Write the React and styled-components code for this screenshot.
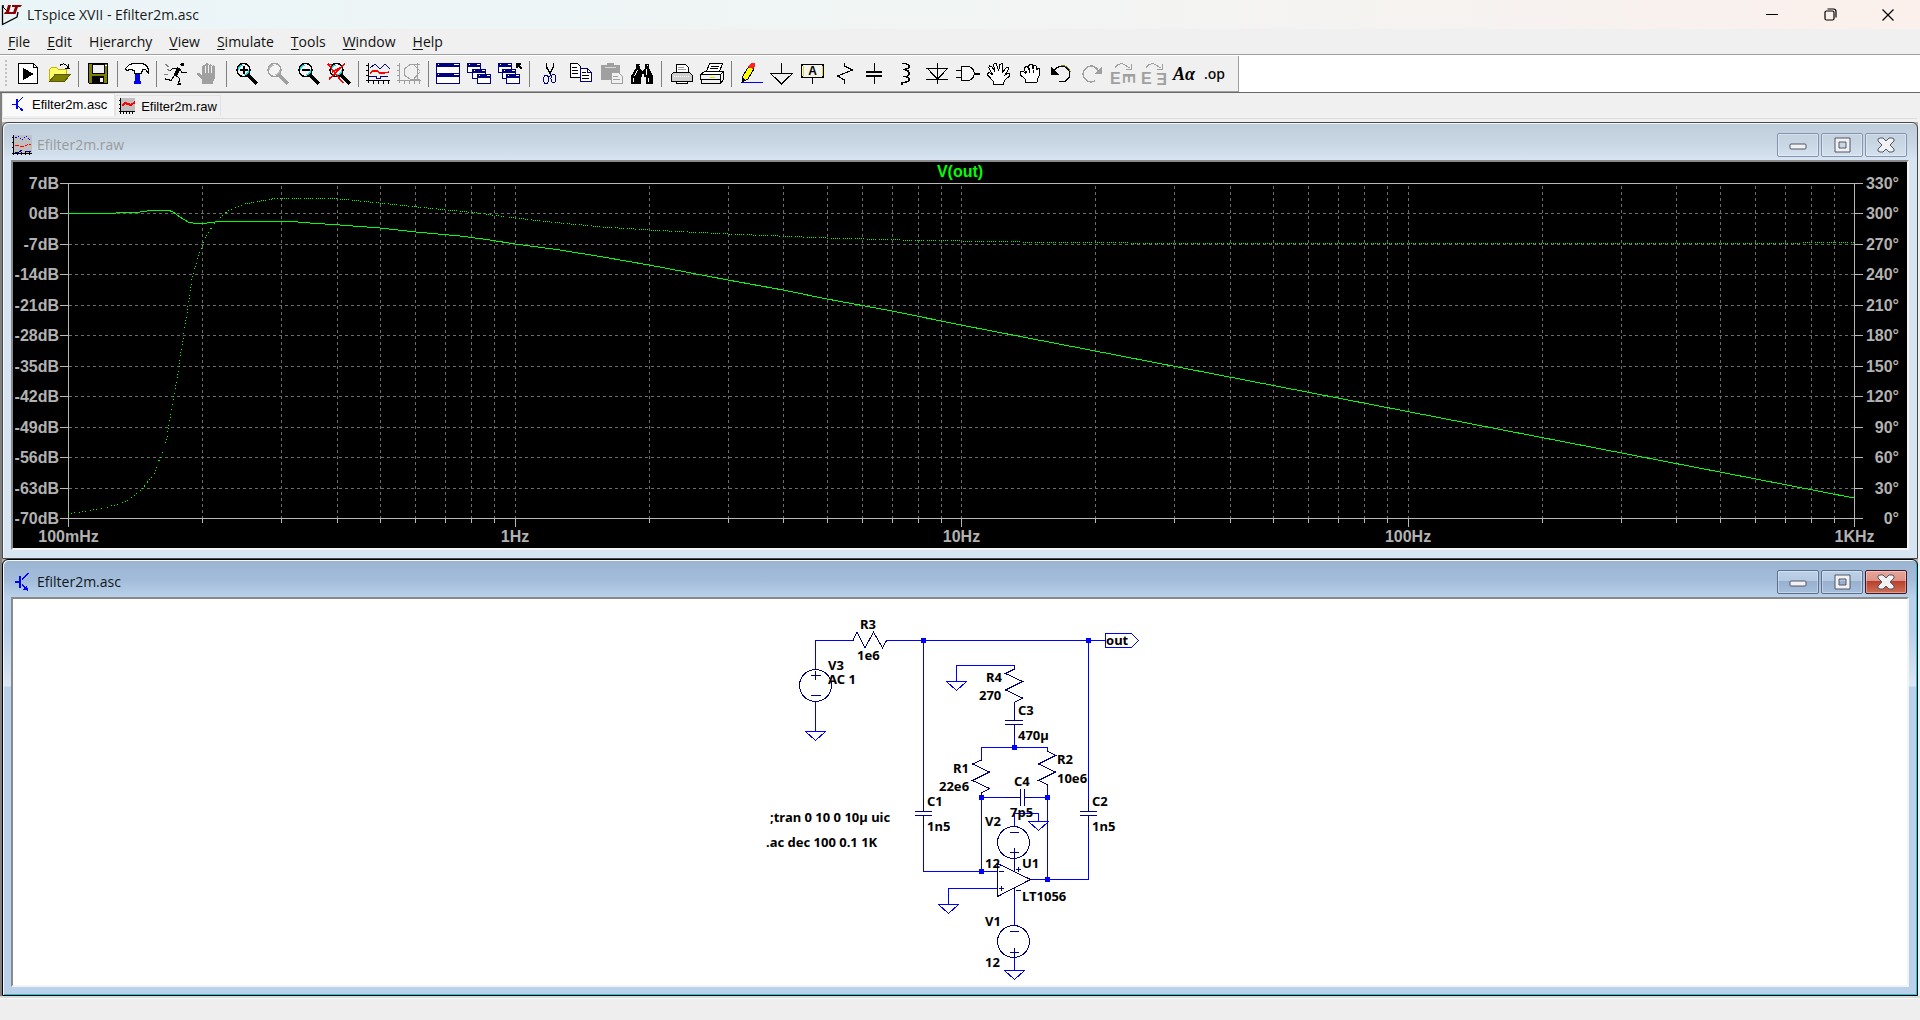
import React from 'react';
import styled, { createGlobalStyle } from 'styled-components';

const GlobalStyle = createGlobalStyle`
  * {
    box-sizing: border-box;
  }
  body {
    margin: 0;
    background: #f0f0f0;
    font-family: 'Open Sans', 'Noto Sans', sans-serif;
    font-size: 14px;
    color: #1a1a1a;
  }
  button {
    font: inherit;
    padding: 0;
    margin: 0;
    border: 0;
    background: transparent;
  }
  svg {
    display: block;
  }
`;

const Wrap = styled.div`
  min-height: 100vh;
  display: flex;
  flex-direction: column;
`;
const TitleBar = styled.header`
  height: 29px;
  display: flex;
  align-items: center;
  padding-right: 3px;
  background: linear-gradient(to right, #eaf5f8, #f1f5f4 50%, #fbf0ec);
`;
const AppTitle = styled.h1`
  flex: 1;
  margin: 0 0 0 5px;
  font-size: 14px;
  font-weight: 400;
`;
const CaptionButton = styled.button`
  width: 58px;
  height: 28px;
  display: flex;
  align-items: center;
  justify-content: center;
`;
const MenuBar = styled.nav`
  height: 26px;
  display: flex;
  gap: 17px;
  padding: 0 8px;
  align-items: center;
  border-bottom: 1px solid #a0a0a0;
`;
const MenuItem = styled.button`
  color: #111;
  u {
    text-underline-offset: 2px;
  }
`;
const ToolBand = styled.div`
  height: 38px;
  background: white;
  border-top: 1px solid white;
  border-bottom: 1px solid #696969;
  display: flex;
`;
const ToolBar = styled.div`
  display: flex;
  align-items: center;
  padding: 0 7px 1px 5px;
  background: #f0f0f0;
  border-right: 1px solid #a0a0a0;
  box-shadow: inset 0 -1px #a0a0a0;
`;
const Grip = styled.div`
  width: 2px;
  height: 28px;
  margin-right: 5px;
  background: repeating-linear-gradient(#c0c0c0 0 2px, transparent 2px 4px);
`;
const ToolButton = styled.button`
  width: 31px;
  height: 32px;
  display: flex;
  align-items: center;
  justify-content: center;
`;
const Separator = styled.div`
  width: 8px;
  height: 26px;
  display: flex;
  justify-content: center;
  &::before {
    content: '';
    width: 1px;
    background: #808080;
  }
`;
const TabStrip = styled.div`
  height: 29px;
  padding: 0 3px 0 0;
  border-left: 2px solid #808080;
  background: #f0f0f0;
`;
const Tabs = styled.div`
  height: 26px;
  display: flex;
  align-items: flex-end;
  padding-bottom: 2px;
  border-bottom: 1px solid #dcdcdc;
`;
const Tab = styled.button`
  height: ${(props) => (props.$active ? '23px' : '21px')};
  display: flex;
  align-items: center;
  gap: 6px;
  padding: ${(props) => (props.$active ? '0 7px 2px 7px' : '0 3px 0 3px')};
  background: ${(props) => (props.$active ? '#fafafa' : '#f0f0f0')};
  border: 1px solid #e3e3e3;
  border-bottom: 0;
  font-family: 'Liberation Sans', sans-serif;
  font-size: 13px;
  color: black;
`;
const Workspace = styled.main`
  flex: 1;
  display: flex;
  flex-direction: column;
  padding-right: 2px;
  border-left: 2px solid #808080;
  background: #b4b0a4;
  box-shadow: inset -2px 0 #f0f0f0;
`;
const ChildWindow = styled.section`
  flex: 1 1 0;
  min-height: 0;
  display: flex;
  flex-direction: column;
  padding: 0 8px 8px;
  border: 1px solid ${(props) => (props.$active ? '#000' : '#484848')};
  border-radius: 6px 6px 0 0;
  background: ${(props) =>
    props.$active
      ? 'linear-gradient(#99b4d1, #a3bcd9 20px, #b9d1ea 37px, #b9d1ea 70px, #dbe7f4 126px, #b9d1ea 127px)'
      : 'linear-gradient(#bfcddb, #c8d6e4 20px, #d7e4f2 37px)'};
  box-shadow: inset 1px 1px #f4f8fc
    ${(props) => (props.$active ? ', inset -1px -1px #1cc6dc' : '')};
`;
const ChildTitleBar = styled.div`
  height: 37px;
  display: flex;
  align-items: center;
  gap: 2px;
  padding: 6px 2px 0 1px;
`;
const ChildTitle = styled.h2`
  flex: 1;
  margin: 0 0 0 3px;
  font-size: 14px;
  font-weight: 400;
  color: ${(props) => (props.$active ? '#101820' : '#9a9a9a')};
`;
const ChildButton = styled.button`
  width: 42px;
  height: 24px;
  display: flex;
  align-items: center;
  justify-content: center;
  border: 1px solid #8494b0;
  border-radius: 2px;
  box-shadow: inset 0 0 0 1px rgba(255, 255, 255, 0.35);
  ${(props) =>
    props.$active &&
    `border-color: #5c6f8c;
     background: linear-gradient(#bdd0e6, #b3c9e2 46%, #98b0cd 47%, #a6bfdc);`}
  ${(props) =>
    props.$active &&
    props.$close &&
    `border-color: #431622;
     background: linear-gradient(#e6a59a, #dc9285 46%, #b8402b 47%, #cf7058);`}
`;
const Sunken = styled.div`
  flex: 1;
  min-height: 0;
  display: flex;
  border: 2px solid;
  border-color: #8a8a8a #f4f4f4 #f4f4f4 #8a8a8a;
  background: ${(props) => props.$color};
`;
const Canvas = styled.svg`
  flex: 1;
  min-width: 0;
  min-height: 0;
  width: 100%;
  height: 100%;
`;
const AxisText = styled.text`
  font-family: 'Liberation Sans', sans-serif;
  font-size: 16px;
  font-weight: 700;
  fill: ${(props) => props.$color || '#b2b2b2'};
  text-anchor: ${(props) => props.$anchor || 'middle'};
`;
const PartText = styled.text`
  font-family: 'Noto Sans', sans-serif;
  font-size: 13px;
  font-weight: 700;
  fill: black;
`;
const StatusBar = styled.footer`
  height: 24px;
  border-top: 2px solid #dadada;
  box-shadow: inset 0 1px #f8f8f8;
  background: #eeeeee;
`;

/* ---------- toolbar icons, 24x24 ---------- */

const G = '#a0a0a0';
const N = '#000080';

const Lens = ({ color = 'black', glass = '#00e5e5', children }) => (
  <>
    <path d='M14 13l9 9' stroke={color} strokeWidth='3' />
    <circle cx='9.5' cy='8' r='6.5' fill='#f4f4f4' stroke={color} strokeWidth='1.5' />
    <path d='M4.5 8q0-4 4-5M14.5 8q0 4-4 5' stroke={glass} strokeWidth='1.5' />
    {children}
  </>
);
const OpenHand = (
  <path
    d='M6.500 22.500v-3L1 13.500l-.5-2 2-1 3.500 2.500L1.500 5.500l1-1.500 2 .5 3.500 5L6.500 3l1-1.500 2 .5 2 7 1.500-6.500 2-1 1 2-.5 7 3.500-4.500 2-.5.5 2-3.500 5.500 3-1.500 2 .5-.5 2-4 3.500-2 3v2z'
    fill='white'
    stroke='black'
  />
);
const Fist = (
  <path
    d='M7.500 20.500v-3l-5-4.500v-3l3-.5 2 2-1-5 1-2h2l1 2 .5-3 1-1h2l1 4 1-3 2 .5 1 4 1-1.500h1.500l.5 2-1 6-2 3v2.500zM8 9v2M11 6v5M15 8v3'
    fill='white'
    stroke='black'
  />
);
const CascadePane = ({ x, y }) => (
  <g>
    <rect x={x + 0.5} y={y + 0.5} width='13' height='9' fill='white' stroke={N} />
    <rect x={x} y={y} width='14' height='4' fill={N} />
    <path d={`M${x + 2} ${y + 1.5}h1M${x + 10} ${y + 1.5}h3`} stroke='white' />
  </g>
);

const icons = {
  new: (
    <>
      <path d='M2.500 1.500h15l4 4v16h-19z' fill='white' stroke='black' />
      <path d='M17.500 1.500v4h4' stroke='black' />
      <path d='M7 6l11 6-11 6z' fill='black' />
    </>
  ),
  open: (
    <>
      <path d='M2.500 19.500v-12l2-2h5l2 2h8v4' fill='#ffff66' stroke='#c8b400' />
      <path d='M2.500 19.500l6-7.500h15l-6 7.500z' fill='#808000' stroke='#5a5a00' />
      <path d='M13 3.500q4-4 8 2M17.500 6h5M21.500 2v5' stroke='black' />
    </>
  ),
  save: (
    <>
      <path d='M2.500 1.500h19v20h-18l-1-1z' fill='#808000' stroke='black' />
      <rect x='6' y='2' width='12' height='9' fill='#f0f0f0' stroke='black' />
      <path d='M19 3.500h2' stroke='white' />
      <rect x='6' y='14' width='12' height='8' fill='black' />
      <rect x='14' y='16' width='3' height='4' fill='#f0f0f0' />
    </>
  ),
  hammer: (
    <>
      <path d='M10 10h5v9h1v3h-7v-3h1z' fill='#0000ff' />
      <path d='M13 10v10' stroke={N} />
      <path
        d='M.5 6.500l4-4 4-1h9l4 2 2 4v4l-3-4h-3v2h-1v2h-7v-3l-4-1-4 1z'
        fill='white'
        stroke='black'
      />
    </>
  ),
  run: (
    <>
      <circle cx='18.5' cy='2.500' r='2' fill='black' />
      <path d='M15 6l-4 8' stroke='black' strokeWidth='3.500' />
      <path d='M14 6.500H8.500l-3 3M16 7l2 3.500h5' stroke='black' />
      <path d='M12 13l4 4-2 5h3M10 14l-3 4.500-6-1.500' stroke='black' strokeWidth='1.200' />
      <path d='M1 2l4 3M3 7l3 2M0 12.500h4' stroke='#808080' />
    </>
  ),
  halt: (
    <>
      <path
        d='M7 22v-4l-5-5v-2h2l3 2V4l2-1 1 1 1-3h2l1 2 2-1 1 2 2-1 1 2v11l-2 4v2z'
        fill={G}
      />
      <path d='M10.500 4v7M13.500 3v8M16.500 4v7' stroke='#f0f0f0' />
    </>
  ),
  zoomIn: (
    <Lens>
      <path d='M9.500 4v8M5.500 8h8' stroke='black' strokeWidth='2' />
    </Lens>
  ),
  zoomPan: <Lens color={G} glass='#b8b8b8' />,
  zoomOut: (
    <Lens>
      <path d='M5.500 8h8' stroke='black' strokeWidth='2' />
    </Lens>
  ),
  zoomFit: (
    <Lens>
      <path d='M1 2l15 19M18 2L2 17M1 2l4 1M5 10l10-5' stroke='red' strokeWidth='1.500' />
    </Lens>
  ),
  plot: (
    <>
      <path d='M2.500 1v20M0 3.500h2M0 8.500h2M0 13.500h2M0 18.500h24M7.500 19v3M12.500 19v3M17.500 19v3M22.500 19v3' stroke='black' />
      <path d='M4 6l5-4 5 5 5-5 5 5' stroke={N} />
      <path d='M4 11l3-2h4l3 2h4l5-1' stroke='red' strokeWidth='1.500' />
      <path d='M3 14.500h7v2h4v-2h8' stroke={N} />
    </>
  ),
  nyquist: (
    <>
      <path d='M2.500 1v20M0 3.500h2M0 8.500h2M0 13.500h2M0 18.500h24M7.500 19v3M12.500 19v3M17.500 19v3M22.500 19v3' stroke={G} />
      <path d='M23 2H14L7 7v6l6 4h10M20 1v18M16 2l7 7M23 10l-7 8' stroke={G} />
    </>
  ),
  tile: (
    <>
      <path d='M.5 1.500h23v20H.5zM.5 11.500h23' fill='white' stroke={N} />
      <rect y='1' width='24' height='4' fill={N} />
      <rect y='11' width='24' height='4' fill={N} />
      <path d='M2 2.500h1M18 2.500h5M2 12.500h1M18 12.500h5' stroke='white' />
    </>
  ),
  cascade: (
    <>
      <CascadePane x={0} y={1} />
      <CascadePane x={5} y={7} />
      <CascadePane x={10} y={12} />
    </>
  ),
  closeAll: (
    <>
      <CascadePane x={0} y={1} />
      <CascadePane x={4} y={7} />
      <CascadePane x={8} y={12} />
      <path d='M19 6V2h4M19 2l5 5' stroke='black' strokeWidth='1.500' />
    </>
  ),
  cut: (
    <>
      <path d='M9.500 1v4l4 7M16.500 1v4l-4 7' stroke='black' strokeWidth='1.500' />
      <ellipse cx='9' cy='17.500' rx='2.500' ry='4' stroke={N} />
      <ellipse cx='16.500' cy='16.500' rx='2.500' ry='4' stroke={N} />
      <path d='M13 11v3l-2 1M13 12l2 2' stroke={N} />
    </>
  ),
  copy: (
    <>
      <path d='M2.500 1.500h7l3 3v11h-10z' fill='white' stroke='black' />
      <path d='M4 5.500h5M4 8.500h6M4 11.500h6' stroke='black' />
      <path d='M12.500 6.500h7l4 4v9h-11z' fill='white' stroke={N} />
      <path d='M19.500 6.500v4h4' stroke={N} />
      <path d='M14 10.500h4M14 13.500h7M14 16.500h7' stroke='black' />
    </>
  ),
  paste: (
    <>
      <path d='M2 3h6V1h7v2h6v15H2z' fill={G} />
      <path d='M6 5.500h11' stroke='#d8d8d8' />
      <path d='M12.500 10.500h7l4 4v7h-11z' fill='#f0f0f0' stroke={G} />
      <path d='M14 14.500h5M14 17.500h7' stroke={G} />
    </>
  ),
  find: (
    <>
      <path d='M6 2h4v4l2 3h1l2-3V2h4v4l4 8v8h-7v-7h-2v-3h-2v3h-1v7H1v-8l5-8z' fill='black' />
      <path d='M7.500 8l-3 6M16.500 7v6M3.500 16v4M18.500 16v4M8.500 3h1M16.500 3h1' stroke='white' />
    </>
  ),
  print: (
    <>
      <path d='M7.500 10.500v-8h9l3 3v5' fill='white' stroke='black' />
      <path d='M9 5.500h6M9 7.500h8' stroke={G} />
      <path d='M4.500 10.500h16l3 3v6h-21v-7z' fill='#d0d0d0' stroke='black' />
      <path d='M7.500 19.500h11v2h-11z' fill='white' stroke='black' />
      <path d='M5 14.500h15' stroke='white' strokeDasharray='1 1' />
    </>
  ),
  printSetup: (
    <>
      <path d='M6.500 9.500l3-8h13l-3 8' fill='white' stroke='black' />
      <path d='M11 4.500h8M10 6.500h8' stroke='black' />
      <path d='M.5 12.500l4-3h19l-3 3z' fill='white' stroke='black' />
      <path d='M.5 12.500h20v5H.5zM1.500 17.500h19v4h-19zM20.500 12.500l3-3v8l-3 4' fill='#f0f0f0' stroke='black' />
      <path d='M10 15.500h5' stroke='#e0e000' />
    </>
  ),
  wire: (
    <>
      <path d='M3 20l1-6 6-10 5 3-6 10z' fill='#ffff00' stroke='black' />
      <path d='M9 5l3-4h4v3l-2 3z' fill='#ff2020' />
      <path d='M3 20l1-4 2 2z' fill='black' />
      <path d='M3 20.500h21' stroke='#0000ff' />
    </>
  ),
  ground: <path d='M11.500 1v10M0 11.500h23M1 12l10.500 10L22 12' stroke='black' strokeWidth='1.200' />,
  label: (
    <>
      <path d='M1.500 2.500h20l1 1v11l-1 1h-20l-1-1v-11z' fill='#f4f4e8' stroke='black' strokeWidth='1.500' />
      <path d='M11.500 16v6' stroke='black' />
      <path d='M2 4v10M21 4v10' stroke='#d6d650' />
      <text x='11.500' y='13' textAnchor='middle' fontFamily='Liberation Sans' fontSize='12' fontWeight='700' fill='black'>
        A
      </text>
    </>
  ),
  resistor: <path d='M12.500 1v3l8 4-15 6 7 4v4' stroke='black' strokeWidth='1.200' />,
  capacitor: (
    <>
      <path d='M11.500 1v8M11.500 15v7' stroke='black' />
      <path d='M3 10h16M3 14h16' stroke='black' strokeWidth='2' />
    </>
  ),
  inductor: (
    <path d='M8 1.500h3q4 1 4 3t-4 3H9q6 0 6 4t-6 3h2q4 1 4 3t-4 3H8v2' stroke='black' strokeWidth='1.500' />
  ),
  diode: (
    <path d='M12.500 1v21M1 6.500h22M3 7l9.500 10L22 7M1 17.500h22' stroke='black' strokeWidth='1.200' />
  ),
  gate: (
    <>
      <path d='M5.500 4.500h7q5 1 6 7-1 6-6 7h-7z' stroke='black' fill='#f8f8f8' />
      <path d='M0 8h5M0 15h5' stroke='black' />
      <path d='M18 12h6' stroke='black' strokeWidth='2' />
    </>
  ),
  move: OpenHand,
  drag: Fist,
  undo: (
    <>
      <path d='M4 10q4-6 9-6 7 1 8 8-1 7-8 8l-3-1' stroke='black' strokeWidth='1.200' />
      <path d='M12 3.500q8 0 9.500 7' stroke='#808000' />
      <path d='M2 5v8h8z' fill='black' />
    </>
  ),
  redo: (
    <>
      <path d='M19 10q-3-6-8-6-7 1-8 8 1 7 8 8l4-1' stroke={G} strokeWidth='1.500' />
      <path d='M22 5v7h-8z' fill={G} />
    </>
  ),
  rotate: (
    <>
      <path d='M4 6q3-5 8-4l7 4M20 2v5h-5' stroke={G} />
      <text x='-1' y='22' fontFamily='Liberation Sans' fontSize='16' fontWeight='700' fill={G}>
        E
      </text>
      <text x='0' y='0' transform='translate(12 11) rotate(90)' fontFamily='Liberation Sans' fontSize='16' fontWeight='700' fill={G}>
        E
      </text>
    </>
  ),
  mirror: (
    <>
      <path d='M4 6q3-5 8-4l7 4M20 2v5h-5' stroke={G} />
      <text x='-1' y='22' fontFamily='Liberation Sans' fontSize='16' fontWeight='700' fill={G}>
        E
      </text>
      <text x='0' y='0' transform='translate(25 11) rotate(180)' fontFamily='Liberation Sans' fontSize='16' fontWeight='700' fill={G}>
        E
      </text>
    </>
  ),
  text: (
    <text x='0' y='18' fontFamily='Liberation Serif' fontSize='18' fontWeight='700' fontStyle='italic' fill='black'>
      Aα
    </text>
  ),
  spice: (
    <text x='0' y='17' fontFamily='Noto Sans' fontSize='14' fontWeight='500' fill='black'>
      .op
    </text>
  ),
};

const toolGroups = [
  ['new', 'open'],
  ['save'],
  ['hammer'],
  ['run', 'halt'],
  ['zoomIn', 'zoomPan', 'zoomOut', 'zoomFit'],
  ['plot', 'nyquist'],
  ['tile', 'cascade', 'closeAll'],
  ['cut', 'copy', 'paste', 'find'],
  ['print', 'printSetup'],
  [
    'wire', 'ground', 'label', 'resistor', 'capacitor', 'inductor', 'diode', 'gate',
    'move', 'drag', 'undo', 'redo', 'rotate', 'mirror', 'text', 'spice',
  ],
];

const AppLogo = () => (
  <svg width='22' height='24' viewBox='0 0 22 24'>
    <path d='M4 3H2.500v18.500L17 14l1-5' fill='none' stroke='black' strokeWidth='1.300' />
    <path d='M2.500 3.500l7 7' stroke='black' />
    <path d='M8 2h3L9 9h5l-1 2H4l1-2h1z' fill='#8b0000' />
    <path d='M12 2h10l-1.500 2H18l-2.500 7h-3L15 4h-3z' fill='#8b0000' />
  </svg>
);
const TransistorIcon = ({ size }) => (
  <svg width={size} height={size} viewBox='0 0 16 16' shapeRendering='crispEdges'>
    <path d='M2 8h4M8 6l5-5M8 10l5 5' stroke='#0000ff' fill='none' />
    <path d='M6.500 3v10' stroke='#0000ff' strokeWidth='2' />
    <path d='M13 15l-1-4-3 3z' fill='#0000ff' />
  </svg>
);
const RawIcon = () => (
  <svg width='16' height='16' viewBox='0 0 16 16' shapeRendering='crispEdges'>
    <rect x='2' width='14' height='14' fill='#c0c0c0' />
    <path d='M1.500 0v16M0 2.500h2M0 6.500h2M0 10.500h2M0 13.500h16M4.500 14v2M7.500 14v2M10.500 14v2M13.500 14v2' stroke='black' />
    <path d='M3 8l3-3 3 1 3 1 4-3' stroke='red' strokeWidth='2' fill='none' />
  </svg>
);
const RawWindowIcon = () => (
  <svg width='20' height='20' viewBox='0 0 20 20' shapeRendering='crispEdges'>
    <rect x='1' width='19' height='19' fill='#c0c0c0' />
    <path d='M1.500 0v20M0 2.500h1M0 7.500h1M0 12.500h1M0 18.500h20M5.500 17v3M9.500 17v3M13.500 17v3M17.500 17v3' stroke='black' />
    <path d='M3 3l3-2 4 4 4-4 4 4' stroke='#0000ff' strokeDasharray='2 1' fill='none' />
    <path d='M3 10l4 1 4 1 4-2 4-1' stroke='red' strokeDasharray='4 1' fill='none' />
    <path d='M3 17l4 0 3-2M13 16h6' stroke={N} fill='none' />
  </svg>
);
const glyphs = {
  Minimize: <rect x='2' y='8' width='16' height='5' rx='1' />,
  Maximize: <path fillRule='evenodd' d='M3 2h15v14H3zM7 6v6h7V6z' />,
  Close: <path d='M2 3l2-1h3l3 3 3-3h3l2 1v2l-4 4 4 4v2l-2 1h-3l-3-3-3 3H4l-2-1v-2l4-4-4-4z' />,
};

/* ---------- bode plot ---------- */

const PLOT = { left: 55.5, right: 1841.5, top: 21.5, bottom: 356.5 };
const DECADE = (PLOT.right - PLOT.left) / 4;
const rows = Array.from({ length: 12 }, (_, i) => ({
  y: Math.floor(PLOT.top + (i * (PLOT.bottom - PLOT.top)) / 11) + 0.5,
  gain: `${7 - i * 7}dB`,
  phase: `${330 - i * 30}°`,
}));
const columns = [];
for (let d = 0; d < 4; d++) {
  for (let n = 1; n < 10; n++) {
    columns.push({
      x: Math.floor(PLOT.left + DECADE * (d + Math.log10(n))) + 0.5,
      major: n === 1,
    });
  }
}
columns.push({ x: PLOT.right, major: true });
const freqs = ['100mHz', '1Hz', '10Hz', '100Hz', '1KHz'];

const GAIN =
  '55,51 103,51 127,50 142,48 155,48 160,50 167,55 175,60 180,61 194,61 202,60 212,59 270,59 285,60 297,61 327,63 367,66 403,70 447,74 477,78 502,82 547,88 590,95 636,103 715,118 770,128 814,137 879,149 948,163 1841,336';
const PHASE_RISE =
  '55,351 61,351 74,349 87,347 95,345 105,342 115,338 123,332 131,325 135,319 141,312 145,301 149,291 154,275 157,256 160,240 163,221 166,205 168,190 170,179 171,169 174,151 177,130 179,117 181,108 183,104 185,94 189,85 194,73 199,65 206,57 212,51 220,46 232,42';
const PHASE_FLAT =
  '232,42 247,39 265,36 310,36 337,38 367,41 404,45 434,48 464,51 487,54 502,56 547,61 590,65 636,68 715,72 814,76 887,78 1007,80 1117,81 1237,81 1787,81 1841,80';

function BodePlot() {
  return (
    <Canvas viewBox='0 0 1894 386' fill='none'>
      <g shapeRendering='crispEdges'>
        <g stroke='#6c6c6c' strokeDasharray='3 3'>
          {rows.slice(1, -1).map((r) => (
            <path key={r.y} d={`M${PLOT.left} ${r.y}H${PLOT.right}`} />
          ))}
          {columns.slice(1, -1).map((c) => (
            <path key={c.x} d={`M${c.x} 24V${PLOT.bottom}`} />
          ))}
        </g>
        <g stroke='#b8b8b8'>
          <path d={`M${PLOT.left} ${PLOT.top}H${PLOT.right}V${PLOT.bottom}H${PLOT.left}z`} />
          {rows.map((r) => (
            <path key={r.y} d={`M47 ${r.y}h8M${PLOT.right} ${r.y}h8`} />
          ))}
          {columns.map((c) => (
            <path key={c.x} d={`M${c.x} ${PLOT.bottom}v${c.major ? 8 : 4}`} />
          ))}
        </g>
        <polyline points={GAIN} stroke='#00ff00' />
        <polyline points={PHASE_RISE} stroke='#00ff00' strokeDasharray='1 2 1 2 1 4' />
        <polyline points={PHASE_FLAT} stroke='#00ff00' strokeDasharray='1 1 1 1 1 1 1 1 1 3' />
      </g>
      {rows.map((r) => (
        <g key={r.y}>
          <AxisText x='46' y={r.y + 5.5} $anchor='end'>
            {r.gain}
          </AxisText>
          <AxisText x='1886' y={r.y + 5.5} $anchor='end'>
            {r.phase}
          </AxisText>
        </g>
      ))}
      {freqs.map((f, i) => (
        <AxisText key={f} x={PLOT.left + DECADE * i} y='380'>
          {f}
        </AxisText>
      ))}
      <AxisText x='947' y='15' $color='#00ff00'>
        V(out)
      </AxisText>
    </Canvas>
  );
}

/* ---------- schematic ---------- */

const nodes = [
  [923, 640], [1088, 640], [1014, 747], [981, 797], [1047, 797], [981, 871], [1047, 879],
];
const grounds = [
  [815, 731], [956, 681], [1038, 821], [948, 904], [1014, 970],
];
const partTexts = [
  [860, 629, 'R3'], [857, 660, '1e6'], [828, 670, 'V3'], [828, 684, 'AC 1'],
  [1106, 645, 'out'], [986, 682, 'R4'], [979, 700, '270'],
  [1018, 715, 'C3'], [1018, 740, '470µ'], [953, 773, 'R1'],
  [939, 791, '22e6'], [1057, 764, 'R2'], [1057, 783, '10e6'],
  [1014, 786, 'C4'], [1010, 817, '7p5'], [927, 806, 'C1'], [927, 831, '1n5'],
  [1092, 806, 'C2'], [1092, 831, '1n5'], [985, 826, 'V2'], [985, 868, '12'],
  [1022, 868, 'U1'], [1022, 901, 'LT1056'], [985, 926, 'V1'], [985, 967, '12'],
  [770, 822, ';tran 0 10 0 10µ uic'], [766, 847, '.ac dec 100 0.1 1K'],
];

function Schematic() {
  return (
    <Canvas viewBox='13 599 1894 386' fill='none'>
      <g shapeRendering='crispEdges'>
        <g stroke='#0000ff'>
          <path d='M815.500 669V640.500H853M886 640.500h219M815.500 701v30' />
          <path d='M923.500 640v160M923.500 828v43.500H982M1088.500 640v160M1088.500 828v51.500H1030' />
          <path d='M956.500 681v-15.500h58V669M1014.500 735v12M981.500 759v-11.500h66v4' />
          <path d='M981.500 797.500H1006M1032 797.500h15M981.500 797v74.500H998M1047.500 785v95' />
          <path d='M1014.500 826v-12.500h24v8M998 888.500h-49.500V904M1014.500 896v29M1014.500 957v13' />
          <path d='M1105.500 633.500h26l7 7-7 7h-26z' />
          {grounds.map(([x, y]) => (
            <path key={x} d={`M${x - 9.5} ${y + 0.5}h20l-10 9z`} />
          ))}
        </g>
        {nodes.map(([x, y]) => (
          <rect key={`${x}-${y}`} x={x - 2} y={y - 2} width='5' height='5' fill='#0000ff' />
        ))}
        <g stroke={N}>
          <path d='M853 640.500l4-8.500 8 16 8.500-16 9 16 4-7.500' />
          <path d='M1014.500 665v4l-9 4.500 17 8-17 8.500 17 8-8 4.500v18M1005 720.500h18M1005 724.500h18M1014.500 724v12' />
          <path d='M981.500 759v1l-9 4 17 8-17 8.500 17 8-8 4.500v4' />
          <path d='M1047.500 751l8 4.500-17 8.500 17 8-17 8.500 9 4v1' />
          <path d='M1006 797.500h14.500M1020.500 789v17M1024.500 789v17M1024 797.500h8' />
          <path d='M923.500 799v12M915 811.500h17M915 815.500h17M923.500 815v13' />
          <path d='M1088.500 799v12M1080 811.500h17M1080 815.500h17M1088.500 815v13' />
          <circle cx='815.500' cy='685.500' r='16' />
          <path d='M811 675.500h10M815.500 671v9M811 695.500h10' />
          <circle cx='1013.500' cy='842.500' r='16' />
          <path d='M1010 832.500h9M1010 852.500h9M1014.500 848v24' />
          <circle cx='1013.500' cy='941.500' r='16' />
          <path d='M1010 931.500h9M1010 952.500h9M1014.500 948v10' />
          <path d='M997.500 863.500l33 16-33 17zM1014.500 888v9' />
          <path d='M999 871.500h5M999 888.500h5M1001.500 886v5M1016 869.500h5M1018.500 867v5M1016 890.500h5' />
        </g>
      </g>
      {partTexts.map(([x, y, label]) => (
        <PartText key={`${x}-${y}`} x={x} y={y}>
          {label}
        </PartText>
      ))}
    </Canvas>
  );
}

function MdiWindow({ title, icon, active, color, children }) {
  return (
    <ChildWindow $active={active}>
      <ChildTitleBar>
        {icon}
        <ChildTitle $active={active}>{title}</ChildTitle>
        {Object.keys(glyphs).map((name) => (
          <ChildButton key={name} aria-label={name} $active={active} $close={name === 'Close'}>
            <svg width='20' height='18' viewBox='0 0 20 18' fill='#f2f2f2' stroke='#50566a'>
              {glyphs[name]}
            </svg>
          </ChildButton>
        ))}
      </ChildTitleBar>
      <Sunken $color={color}>{children}</Sunken>
    </ChildWindow>
  );
}

const menus = [
  ['', 'F', 'ile'],
  ['', 'E', 'dit'],
  ['H', 'i', 'erarchy'],
  ['', 'V', 'iew'],
  ['', 'S', 'imulate'],
  ['', 'T', 'ools'],
  ['', 'W', 'indow'],
  ['', 'H', 'elp'],
];

function App() {
  return (
    <Wrap>
      <GlobalStyle />
      <TitleBar>
        <AppLogo />
        <AppTitle>LTspice XVII - Efilter2m.asc</AppTitle>
        <CaptionButton aria-label='Minimize'>
          <svg width='12' height='12' stroke='black'>
            <path d='M0 5.500h12' />
          </svg>
        </CaptionButton>
        <CaptionButton aria-label='Restore'>
          <svg width='13' height='13' stroke='black' fill='none' strokeWidth='1.200'>
            <rect x='1' y='3' width='9' height='9' rx='1.500' />
            <path d='M3.500 1h6q2.500 0 2.500 2.500v6' />
          </svg>
        </CaptionButton>
        <CaptionButton aria-label='Close'>
          <svg width='12' height='12' stroke='black' strokeWidth='1.200'>
            <path d='M.5.5l11 11M11.500.5l-11 11' />
          </svg>
        </CaptionButton>
      </TitleBar>
      <MenuBar>
        {menus.map(([pre, key, rest]) => (
          <MenuItem key={rest}>
            {pre}
            <u>{key}</u>
            {rest}
          </MenuItem>
        ))}
      </MenuBar>
      <ToolBand>
        <ToolBar role='toolbar'>
          <Grip />
          {toolGroups.map((group, i) => (
            <React.Fragment key={group[0]}>
              {i > 0 && <Separator />}
              {group.map((name) => (
                <ToolButton key={name} aria-label={name}>
                  <svg width='24' height='24' viewBox='0 0 24 24' fill='none' shapeRendering='crispEdges' overflow='visible'>
                    {icons[name]}
                  </svg>
                </ToolButton>
              ))}
            </React.Fragment>
          ))}
        </ToolBar>
      </ToolBand>
      <TabStrip>
        <Tabs>
          <Tab $active>
            <TransistorIcon size={16} />
            Efilter2m.asc
          </Tab>
          <Tab>
            <RawIcon />
            Efilter2m.raw
          </Tab>
        </Tabs>
      </TabStrip>
      <Workspace>
        <MdiWindow title='Efilter2m.raw' icon={<RawWindowIcon />} color='black'>
          <BodePlot />
        </MdiWindow>
        <MdiWindow title='Efilter2m.asc' icon={<TransistorIcon size={20} />} color='white' active>
          <Schematic />
        </MdiWindow>
      </Workspace>
      <StatusBar />
    </Wrap>
  );
}

export default App;
